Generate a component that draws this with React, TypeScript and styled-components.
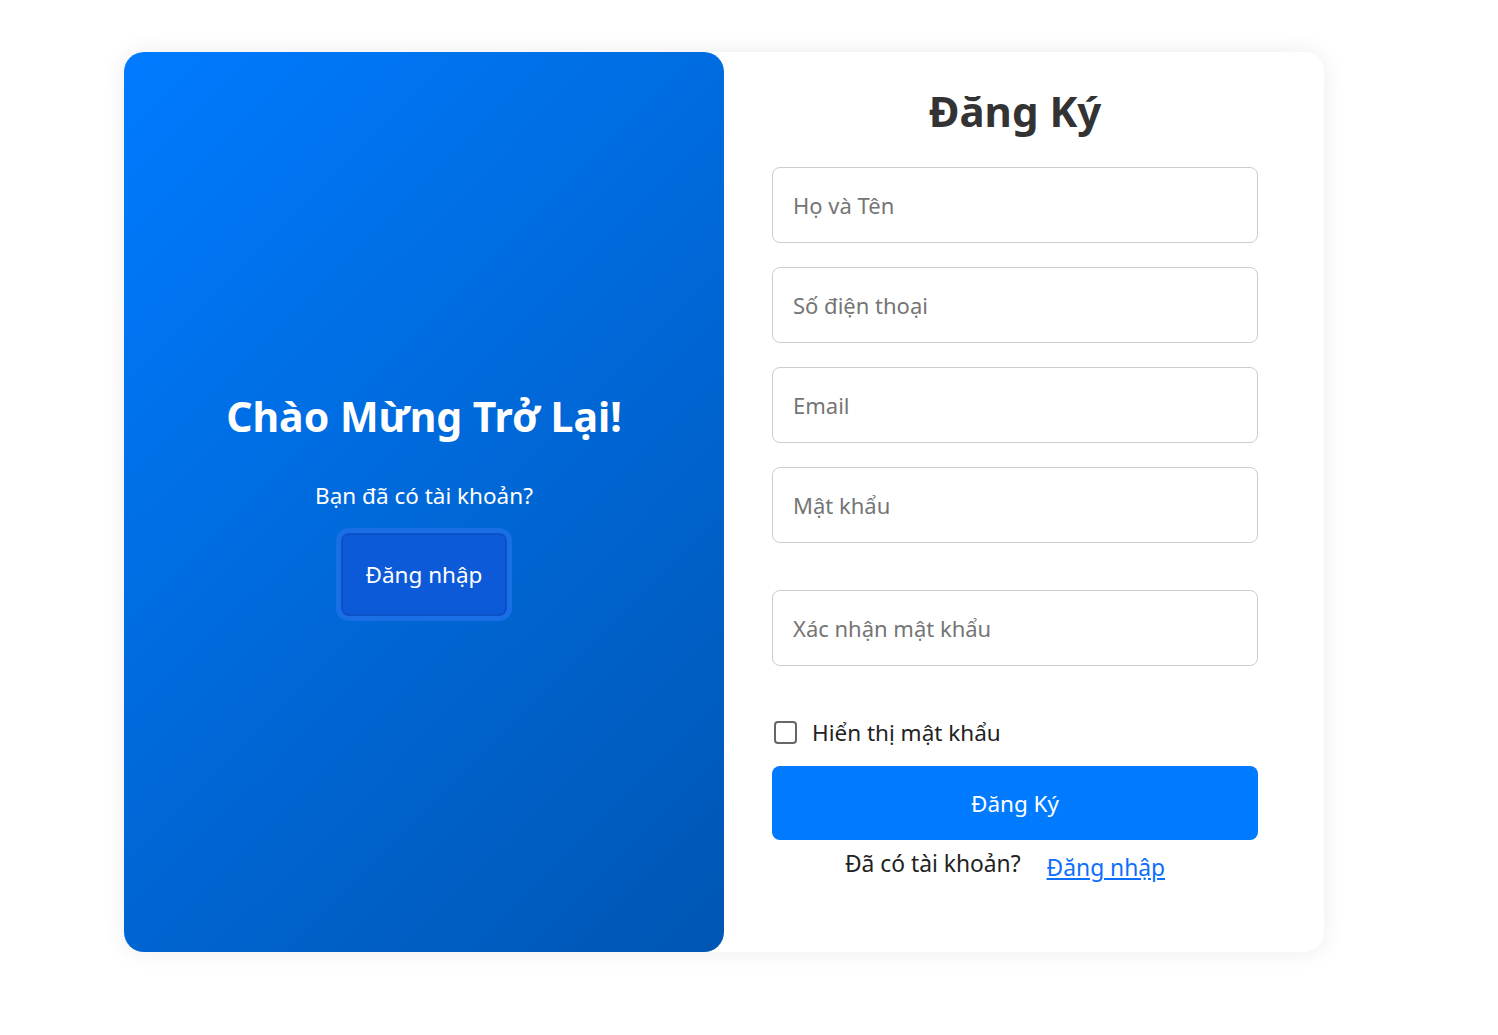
import React from 'react';
import styled, { createGlobalStyle } from 'styled-components';

const GlobalStyle = createGlobalStyle`
	body {
		margin: 0;
		background: #ffffff;
		font-family: 'Noto Sans', 'Open Sans', sans-serif;
	}
`;

const Page = styled.div`
	width: 1498px;
	height: 1035px;
	padding: 52px 0 0 124px;
	box-sizing: border-box;
`;

const Card = styled.div`
	width: 1200px;
	height: 900px;
	display: flex;
	border-radius: 20px;
	background: #ffffff;
	box-shadow: 0 0 24px rgba(0, 0, 0, 0.08);
`;

const WelcomePanel = styled.section`
	width: 600px;
	display: flex;
	flex-direction: column;
	align-items: center;
	justify-content: center;
	border-radius: 20px;
	background: linear-gradient(135deg, #007bff 0%, #0056b3 100%);
	color: #ffffff;
`;

const WelcomeTitle = styled.h2`
	margin: 0 0 36px;
	font-size: 41px;
	font-weight: 700;
`;

const WelcomeText = styled.p`
	margin: 0 0 22px;
	font-size: 22.5px;
`;

const GhostButton = styled.button`
	font-family: inherit;
	font-size: 22.5px;
	color: #ffffff;
	background: #0d5ad8;
	border: 2px solid #0b52c8;
	border-radius: 8px;
	padding: 24px 23px;
	box-shadow: 0 0 0 5px #1b6fe6;
	cursor: pointer;
`;

const FormPanel = styled.section`
	width: 600px;
	padding: 30px 0 0 48px;
	box-sizing: border-box;
`;

const Form = styled.form`
	width: 486px;
	display: flex;
	flex-direction: column;
`;

const FormTitle = styled.h2`
	margin: 0 0 28px;
	text-align: center;
	font-size: 42px;
	font-weight: 700;
	color: #333333;
`;

const Field = styled.input<{ $gap?: number }>`
	height: 76px;
	box-sizing: border-box;
	margin-bottom: ${props => props.$gap ?? 24}px;
	padding: 0 20px;
	font-family: inherit;
	font-size: 22px;
	color: #333;
	border: 1px solid #cccccc;
	border-radius: 8px;
	outline: none;
	::placeholder {
		color: #555555;
	}
`;

const CheckRow = styled.label`
	display: flex;
	align-items: center;
	gap: 15px;
	margin: 51px 0 18px 2px;
	font-size: 22.5px;
	color: #222;
`;

const CheckBox = styled.span`
	width: 23px;
	height: 23px;
	box-sizing: border-box;
	border: 2px solid #666;
	border-radius: 4px;
`;

const SubmitButton = styled.button`
	height: 74px;
	font-family: inherit;
	font-size: 22.5px;
	color: #ffffff;
	background: #007bff;
	border: none;
	border-radius: 8px;
	cursor: pointer;
`;

const Footer = styled.div`
	display: flex;
	justify-content: center;
	align-items: baseline;
	gap: 26px;
	margin-top: 8px;
	padding-right: 20px;
	font-size: 22.8px;
	color: #222;
`;

const FooterLink = styled.a`
	color: #0d6efd;
	text-decoration: underline;
	position: relative;
	top: 4px;
`;

export default function App() {
	return (
		<>
			<GlobalStyle />
			<Page>
				<Card>
					<WelcomePanel>
						<WelcomeTitle>Chào Mừng Trở Lại!</WelcomeTitle>
						<WelcomeText>Bạn đã có tài khoản?</WelcomeText>
						<GhostButton type='button'>Đăng nhập</GhostButton>
					</WelcomePanel>
					<FormPanel>
						<Form onSubmit={e => e.preventDefault()}>
							<FormTitle>Đăng Ký</FormTitle>
							<Field placeholder='Họ và Tên' />
							<Field placeholder='Số điện thoại' />
							<Field placeholder='Email' />
							<Field placeholder='Mật khẩu' type='password' $gap={47} />
							<Field placeholder='Xác nhận mật khẩu' type='password' $gap={0} />
							<CheckRow>
								<CheckBox />
								Hiển thị mật khẩu
							</CheckRow>
							<SubmitButton type='submit'>Đăng Ký</SubmitButton>
							<Footer>
								<span>Đã có tài khoản?</span>
								<FooterLink href='#'>Đăng nhập</FooterLink>
							</Footer>
						</Form>
					</FormPanel>
				</Card>
			</Page>
		</>
	);
}
